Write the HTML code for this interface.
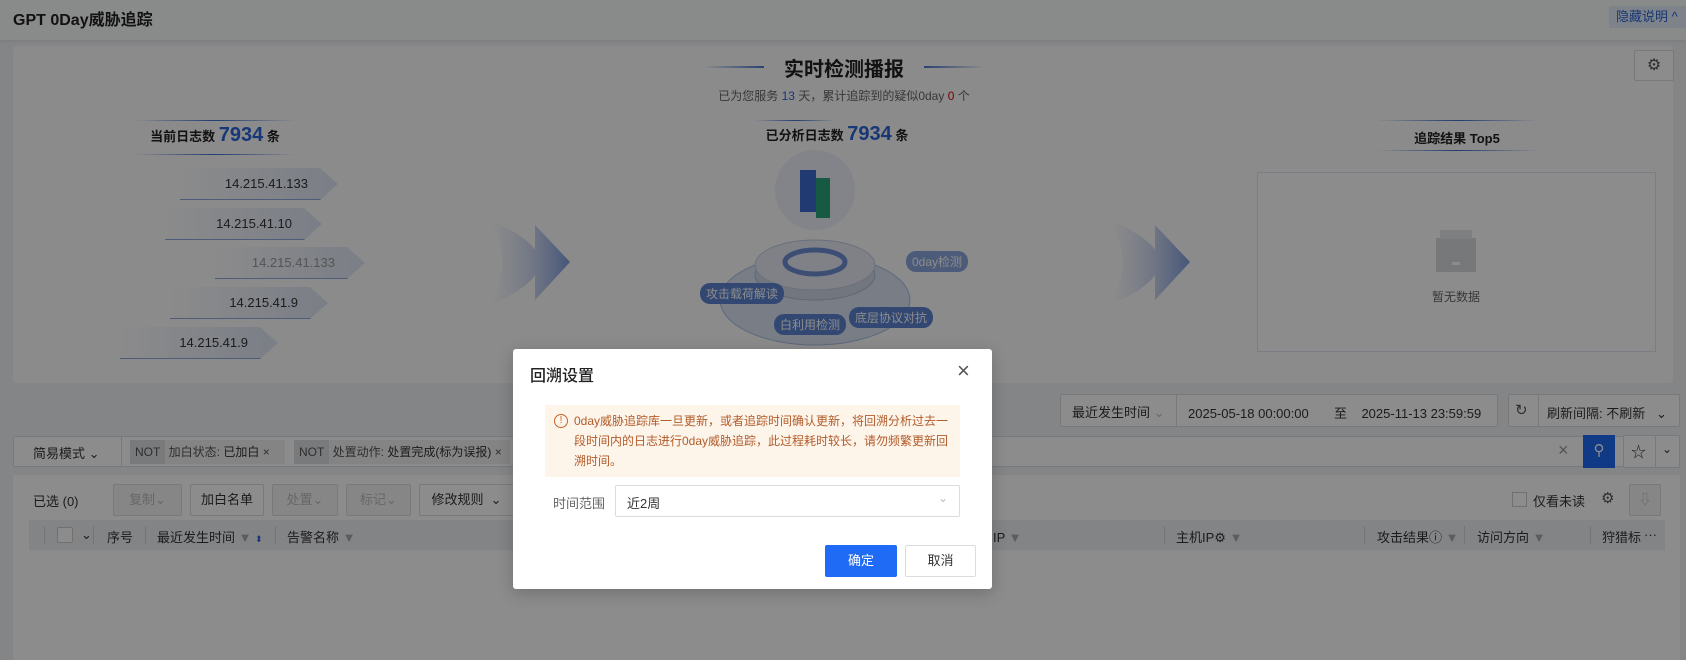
<!DOCTYPE html>
<html><head><meta charset="utf-8"><style>
*{box-sizing:border-box;margin:0;padding:0}
body{width:1686px;height:660px;overflow:hidden;background:#f0f2f5;font-family:"Liberation Sans","Noto Sans CJK SC",sans-serif;color:#333;position:relative;font-size:12px}
.abs{position:absolute}
.hdr{left:0;top:0;width:1686px;height:40px;background:#fafbfc;box-shadow:0 1px 3px rgba(0,0,0,.08)}
.panel{left:13px;top:46px;width:1660px;height:337px;background:#fdfdfe;border-radius:4px}
.ip{height:32px;background:linear-gradient(90deg,rgba(220,228,245,0),#dfe6f5);border-bottom:1px solid #8ea6dc;font-size:13px;color:#333;line-height:31px;text-align:right;padding-right:30px;clip-path:polygon(0 0,calc(100% - 18px) 0,100% 50%,calc(100% - 18px) 100%,0 100%)}
.lbl{background:#5b84cf;color:#fff;border-radius:10px;font-size:12px;padding:2px 6px;white-space:nowrap}
.box{border:1px solid #d9dce1;background:#fff;border-radius:2px}
.btn{border:1px solid #d9dce1;background:#fff;border-radius:2px;height:32px;line-height:30px;text-align:center;font-size:13px}
.th{font-size:13px;color:#333;top:527px}
.dv{width:1px;height:18px;background:#d0d3d8;top:526px}
.ov{left:0;top:0;width:1686px;height:660px;background:rgba(0,0,0,.45)}
</style></head><body>
<div class="abs hdr"></div>
<div class="abs" style="left:13px;top:6px;font-size:16px;font-weight:bold;color:#222">GPT 0Day威胁追踪</div>
<div class="abs" style="left:1609px;top:6px;width:77px;height:22px;background:#e6eefb;color:#2b65d9;font-size:13px;line-height:22px;padding-left:7px">隐藏说明 ^</div>

<div class="abs panel"></div>
<div class="abs box" style="left:1634px;top:50px;width:40px;height:31px;text-align:center;line-height:29px;font-size:16px;color:#555">⚙</div>
<div class="abs" style="left:704px;top:66px;width:60px;height:2px;background:linear-gradient(90deg,transparent,#4a78d0)"></div>
<div class="abs" style="left:924px;top:66px;width:60px;height:2px;background:linear-gradient(90deg,#4a78d0,transparent)"></div>
<div class="abs" style="left:744px;top:53px;width:200px;text-align:center;font-size:20px;font-weight:bold;color:#222">实时检测播报</div>
<div class="abs" style="left:644px;top:87px;width:400px;text-align:center;font-size:12px;color:#666">已为您服务 <span style="color:#2b65d9">13</span> 天，累计追踪到的疑似0day <span style="color:#d00">0</span> 个</div>

<div class="abs" style="left:135px;top:120px;width:160px;height:1px;background:linear-gradient(90deg,transparent,#3d6fd0,transparent)"></div>
<div class="abs" style="left:135px;top:154px;width:160px;height:1px;background:linear-gradient(90deg,transparent,#3d6fd0,transparent)"></div>
<div class="abs" style="left:115px;top:124px;width:200px;text-align:center;font-size:13px;font-weight:bold;color:#222">当前日志数 <span style="font-size:20px;color:#2b65d9">7934</span> 条</div>

<div class="abs ip" style="left:180px;top:168px;width:158px">14.215.41.133</div>
<div class="abs ip" style="left:165px;top:208px;width:157px">14.215.41.10</div>
<div class="abs ip" style="left:215px;top:247px;width:150px;color:#999">14.215.41.133</div>
<div class="abs ip" style="left:170px;top:287px;width:158px">14.215.41.9</div>
<div class="abs ip" style="left:120px;top:327px;width:158px">14.215.41.9</div>

<svg class="abs" style="left:480px;top:205px" width="90" height="115"><defs><linearGradient id="ag" x1="0" x2="1"><stop offset="0" stop-color="#c9d5f0" stop-opacity="0"/><stop offset="1" stop-color="#7f9cdd"/></linearGradient></defs><path d="M10 15 Q45 30 55 45 L55 20 L90 57 L55 95 L55 70 Q45 85 10 100 Q35 57 10 15Z" fill="url(#ag)"/></svg>
<svg class="abs" style="left:1100px;top:205px" width="90" height="115"><path d="M10 15 Q45 30 55 45 L55 20 L90 57 L55 95 L55 70 Q45 85 10 100 Q35 57 10 15Z" fill="url(#ag)"/></svg>

<div class="abs" style="left:755px;top:120px;width:80px;height:1px;background:linear-gradient(90deg,transparent,#3d6fd0,transparent)"></div>
<div class="abs" style="left:737px;top:123px;width:200px;text-align:center;font-size:13px;font-weight:bold;color:#222">已分析日志数 <span style="font-size:20px;color:#2b65d9">7934</span> 条</div>

<svg class="abs" style="left:700px;top:150px" width="260" height="200">
<ellipse cx="115" cy="150" rx="95" ry="45" fill="#dbe4f5" stroke="#a9bde6"/>
<ellipse cx="115" cy="125" rx="60" ry="25" fill="#cfd7e6" stroke="#b0bcd3"/>
<ellipse cx="115" cy="115" rx="60" ry="25" fill="#e7ecf6" stroke="#c0cbe0"/>
<ellipse cx="115" cy="112" rx="30" ry="12" fill="none" stroke="#6f8fd4" stroke-width="5"/>
<circle cx="115" cy="40" r="40" fill="#e8eef8" opacity=".8"/>
<rect x="100" y="20" width="16" height="42" fill="#3f6ad0"/><rect x="116" y="28" width="14" height="40" fill="#2aa57a"/>
<circle cx="124" cy="-8" r="6" fill="#a8c2ef"/>
</svg>
<div class="abs lbl" style="left:700px;top:283px">攻击载荷解读</div>
<div class="abs lbl" style="left:774px;top:314px">白利用检测</div>
<div class="abs lbl" style="left:849px;top:307px">底层协议对抗</div>
<div class="abs lbl" style="left:906px;top:251px;opacity:.7">0day检测</div>

<div class="abs" style="left:1377px;top:120px;width:160px;height:1px;background:linear-gradient(90deg,transparent,#3d6fd0,transparent)"></div>
<div class="abs" style="left:1377px;top:150px;width:160px;height:1px;background:linear-gradient(90deg,transparent,#3d6fd0,transparent)"></div>
<div class="abs" style="left:1357px;top:128px;width:200px;text-align:center;font-size:13px;font-weight:bold;color:#222">追踪结果 Top5</div>
<div class="abs" style="left:1257px;top:172px;width:399px;height:180px;border:1px solid #dfe5f0;background:#fff"></div>
<div class="abs" style="left:1436px;top:238px;width:40px;height:34px;background:#d9dadd"></div>
<div class="abs" style="left:1440px;top:230px;width:32px;height:9px;background:#e6e7ea"></div>
<div class="abs" style="left:1452px;top:262px;width:8px;height:3px;background:#fff"></div>
<div class="abs" style="left:1406px;top:288px;width:100px;text-align:center;font-size:12px;color:#666">暂无数据</div>

<div class="abs box" style="left:1060px;top:394px;width:438px;height:33px"></div>
<div class="abs" style="left:1072px;top:402px;font-size:13px">最近发生时间 <span style="color:#bbb">⌄</span></div>
<div class="abs" style="left:1176px;top:395px;width:1px;height:31px;background:#d9dce1"></div>
<div class="abs" style="left:1188px;top:403px;font-size:13px">2025-05-18 00:00:00 &nbsp;&nbsp;&nbsp;&nbsp;&nbsp; 至 &nbsp;&nbsp; 2025-11-13 23:59:59</div>
<div class="abs box" style="left:1508px;top:394px;width:172px;height:33px"></div>
<div class="abs" style="left:1538px;top:395px;width:1px;height:31px;background:#d9dce1"></div>
<div class="abs" style="left:1515px;top:401px;font-size:15px;color:#555">↻</div>
<div class="abs" style="left:1547px;top:403px;font-size:13px">刷新间隔: 不刷新 &nbsp; ⌄</div>

<div class="abs box" style="left:13px;top:436px;width:1667px;height:31px"></div>
<div class="abs" style="left:121px;top:437px;width:1px;height:29px;background:#d9dce1"></div>
<div class="abs" style="left:33px;top:443px;font-size:13px">简易模式 ⌄</div>
<div class="abs" style="left:130px;top:440px;width:155px;height:24px;background:#f0f1f3;font-size:12px;line-height:24px;color:#555"><span style="background:#dcdee2;padding:5px 5px">NOT</span> 加白状态: <span style="color:#333">已加白</span> ×</div>
<div class="abs" style="left:294px;top:440px;width:216px;height:24px;background:#f0f1f3;font-size:12px;line-height:24px;color:#555"><span style="background:#dcdee2;padding:5px 5px">NOT</span> 处置动作: <span style="color:#333">处置完成(标为误报)</span> ×</div>
<div class="abs" style="left:1558px;top:440px;font-size:18px;color:#999">×</div>
<div class="abs" style="left:1583px;top:435px;width:32px;height:33px;background:#1f6bf5;color:#fff;text-align:center;line-height:32px;font-size:15px">⚲</div>
<div class="abs box" style="left:1623px;top:435px;width:57px;height:33px"></div>
<div class="abs" style="left:1655px;top:436px;width:1px;height:31px;background:#d9dce1"></div>
<div class="abs" style="left:1631px;top:441px;font-size:15px">☆</div>
<div class="abs" style="left:1662px;top:442px;font-size:12px">⌄</div>

<div class="abs" style="left:13px;top:475px;width:1667px;height:185px;background:#fff"></div>
<div class="abs" style="left:33px;top:491px;font-size:13px">已选 (0)</div>
<div class="abs btn" style="left:113px;top:484px;width:69px;color:#bbb;background:#f5f5f5">复制⌄</div>
<div class="abs btn" style="left:190px;top:484px;width:74px">加白名单</div>
<div class="abs btn" style="left:272px;top:484px;width:66px;color:#bbb;background:#f5f5f5">处置⌄</div>
<div class="abs btn" style="left:346px;top:484px;width:65px;color:#bbb;background:#f5f5f5">标记⌄</div>
<div class="abs btn" style="left:419px;top:484px;width:95px">修改规则 &nbsp;⌄</div>
<div class="abs" style="left:1512px;top:492px;width:15px;height:15px;border:1px solid #ccc;background:#fff"></div>
<div class="abs" style="left:1533px;top:491px;font-size:13px">仅看未读</div>
<div class="abs" style="left:1601px;top:489px;font-size:15px;color:#555">⚙</div>
<div class="abs btn" style="left:1629px;top:484px;width:32px;color:#bbb;background:#f5f5f5">⇩</div>

<div class="abs" style="left:29px;top:520px;width:1636px;height:30px;background:#eef0f4"></div>
<div class="abs dv" style="left:44px"></div>
<div class="abs" style="left:57px;top:527px;width:16px;height:16px;border:1px solid #ccc;background:#fff;border-radius:2px"></div>
<div class="abs th" style="left:81px">⌄</div>
<div class="abs dv" style="left:93px"></div>
<div class="abs th" style="left:107px">序号</div>
<div class="abs dv" style="left:145px"></div>
<div class="abs th" style="left:157px">最近发生时间 <span style="color:#aaa">▼</span> <span style="color:#2b65d9;font-size:9px">⬍</span></div>
<div class="abs dv" style="left:275px"></div>
<div class="abs th" style="left:287px">告警名称 <span style="color:#aaa">▼</span></div>
<div class="abs th" style="left:980px">的IP <span style="color:#aaa">▼</span></div>
<div class="abs dv" style="left:1164px"></div>
<div class="abs th" style="left:1176px">主机IP⚙ <span style="color:#aaa">▼</span></div>
<div class="abs dv" style="left:1364px"></div>
<div class="abs th" style="left:1377px">攻击结果ⓘ <span style="color:#aaa">▼</span></div>
<div class="abs dv" style="left:1464px"></div>
<div class="abs th" style="left:1477px">访问方向 <span style="color:#aaa">▼</span></div>
<div class="abs dv" style="left:1590px"></div>
<div class="abs th" style="left:1602px">狩猎标</div>
<div class="abs th" style="left:1644px">···</div>

<div class="abs ov"></div>

<div class="abs" style="left:513px;top:349px;width:479px;height:240px;background:#fff;border-radius:3px;box-shadow:0 4px 16px rgba(0,0,0,.2)"></div>
<div class="abs" style="left:530px;top:362px;font-size:16px;font-weight:500;color:#222">回溯设置</div>
<div class="abs" style="left:957px;top:358px;font-size:22px;color:#555;font-weight:300">×</div>
<div class="abs" style="left:545px;top:405px;width:415px;height:72px;background:#fdf4ea"></div>
<div class="abs" style="left:554px;top:414px;width:14px;height:14px;border:1px solid #c4652c;border-radius:50%;color:#c4652c;font-size:10px;line-height:12px;text-align:center">!</div>
<div class="abs" style="left:574px;top:411px;font-size:12px;line-height:20px;color:#b25c2a;white-space:nowrap">0day威胁追踪库一旦更新，或者追踪时间确认更新，将回溯分析过去一<br>段时间内的日志进行0day威胁追踪，此过程耗时较长，请勿频繁更新回<br>溯时间。</div>
<div class="abs" style="left:553px;top:493px;font-size:13px;color:#666">时间范围</div>
<div class="abs box" style="left:615px;top:485px;width:345px;height:32px"></div>
<div class="abs" style="left:627px;top:493px;font-size:13px;color:#333">近2周</div>
<div class="abs" style="left:938px;top:491px;font-size:12px;color:#bbb">⌄</div>
<div class="abs" style="left:825px;top:545px;width:72px;height:32px;background:#1f6bf5;color:#fff;font-size:13px;line-height:32px;text-align:center;border-radius:2px">确定</div>
<div class="abs btn" style="left:905px;top:545px;width:71px">取消</div>
</body></html>
